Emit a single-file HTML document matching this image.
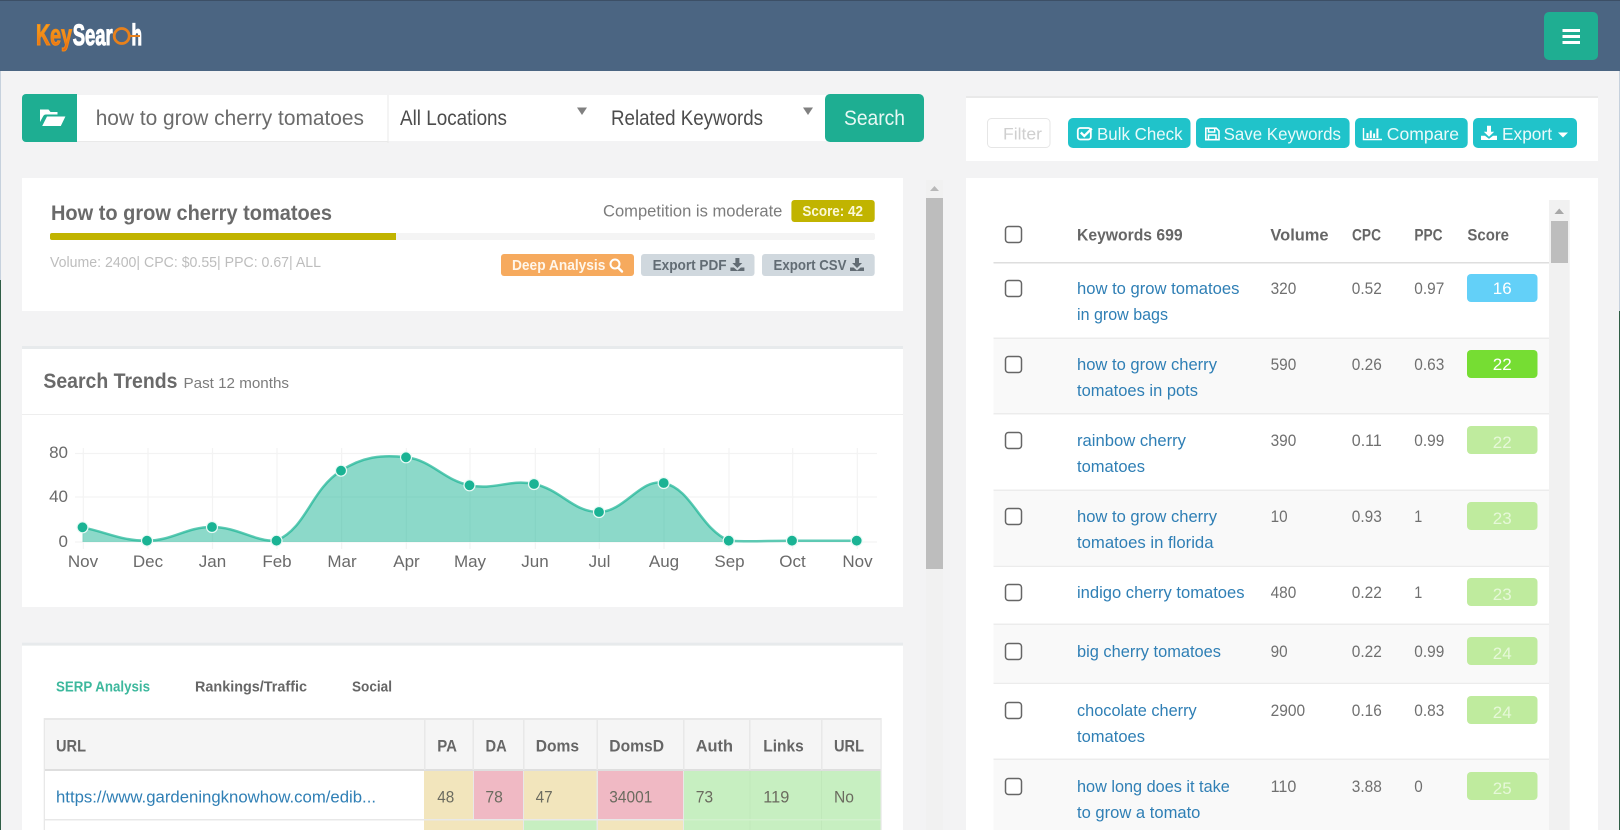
<!DOCTYPE html>
<html lang="en">
<head>
<meta charset="utf-8">
<title>KeySearch</title>
<style>
html,body{margin:0;padding:0;background:#f3f3f4;width:1620px;height:830px;overflow:hidden}
svg{display:block;position:absolute;left:0;top:0}
text{font-family:"Liberation Sans",Arial,sans-serif}
.b{font-weight:700}
.th{font-size:16.500px;font-weight:700;fill:#666}
.lk{font-size:17px;fill:#2f7fb5}
.n{font-size:17px;fill:#707070}
.sc{font-size:17px;fill:#fff;text-anchor:middle}
.fd{font-size:17px;fill:#e6f8d8;text-anchor:middle}
.bt{font-size:17.500px;fill:#eafafa}
.ax{font-size:17px;fill:#6a6a6a;text-anchor:middle}
.ay{font-size:17px;fill:#6a6a6a;text-anchor:end}
.cb{fill:#fff;stroke:#666;stroke-width:1.5}
.cell{font-size:17px;fill:#6b6b5f}
</style>
</head>
<body>
<svg xmlns="http://www.w3.org/2000/svg" width="1620" height="830" viewBox="0 0 1620 830">
<defs>
<linearGradient id="og" x1="0" y1="0" x2="0" y2="1"><stop offset="0" stop-color="#f9b020"/><stop offset="1" stop-color="#e9640f"/></linearGradient>
</defs>
<rect width="1620" height="830" fill="#f3f3f4"/>
<!-- edges -->
<rect x="0" y="71" width="1" height="209" fill="#c6d1dd"/>
<rect x="0" y="280" width="1" height="550" fill="#2f5d46"/>
<rect x="1619" y="71" width="1" height="240" fill="#c6d1dd"/>
<rect x="1619" y="311" width="1" height="519" fill="#2f5d46"/>
<!-- header -->
<rect width="1620" height="71" fill="#4b6582"/>
<rect width="1620" height="1" fill="#3c4f66"/>
<text x="36" y="45" font-size="30" class="b" fill="url(#og)" stroke="#f08a18" stroke-width="1.100" textLength="36" lengthAdjust="spacingAndGlyphs">Key</text>
<text x="72.700" y="45" font-size="30" class="b" fill="#fff" stroke="#fff" stroke-width="1.100" textLength="40" lengthAdjust="spacingAndGlyphs">Sear</text>
<circle cx="121.700" cy="36" r="7.500" fill="none" stroke="#e8811c" stroke-width="2.800"/>
<text x="131.500" y="45" font-size="30" class="b" fill="#fff" stroke="#fff" stroke-width="1.300" textLength="10.500" lengthAdjust="spacingAndGlyphs">h</text>
<rect x="129" y="35" width="11" height="2" fill="#e8811c"/>
<rect x="1544" y="12" width="54" height="48" rx="5" fill="#1fae92"/>
<rect x="1562.500" y="29" width="17.500" height="3" fill="#fff"/><rect x="1562.500" y="35" width="17.500" height="3" fill="#fff"/><rect x="1562.500" y="41" width="17.500" height="3" fill="#fff"/>

<!-- search row -->
<rect x="77" y="95" width="749" height="46" fill="#fff"/>
<rect x="387.500" y="95" width="1" height="48" fill="#e8e8e8"/>
<rect x="77" y="141" width="311" height="1" fill="#e9e9e9"/>
<path d="M26 94h51v48H26a4 4 0 0 1-4-4V98a4 4 0 0 1 4-4z" fill="#1eae92"/>
<path d="M40 109.500h8.500l2 2.500h7v2.500h-11.500c-1.500 0-2.300.7-3 2l-3 5.500z" fill="#fff"/>
<path d="M47 116.500h18.400l-4.600 9.500h-18.600z" fill="#fff"/>
<text x="95.700" y="125" font-size="21.500" fill="#6b6b6b" textLength="268.300" lengthAdjust="spacingAndGlyphs">how to grow cherry tomatoes</text>
<text x="400" y="125" font-size="21" fill="#4c4c4c" textLength="107" lengthAdjust="spacingAndGlyphs">All Locations</text>
<path d="M577 107.500h10l-5 7.500z" fill="#808080"/>
<text x="611" y="125" font-size="21" fill="#4c4c4c" textLength="152" lengthAdjust="spacingAndGlyphs">Related Keywords</text>
<path d="M803 107.500h10l-5 7.500z" fill="#808080"/>
<rect x="825" y="94" width="99" height="48" rx="5" fill="#1eae92"/>
<text x="844" y="125" font-size="21.500" fill="#e8f8f4" textLength="61" lengthAdjust="spacingAndGlyphs">Search</text>

<!-- summary card -->
<rect x="22" y="178" width="881" height="133" fill="#fff"/>
<text x="51" y="220" font-size="21" class="b" fill="#6a6a6a" textLength="281" lengthAdjust="spacingAndGlyphs">How to grow cherry tomatoes</text>
<rect x="50" y="233" width="825" height="7" rx="2" fill="#f4f4f4"/>
<path d="M52 233h344v7H52a2 2 0 0 1-2-2v-3a2 2 0 0 1 2-2z" fill="#c1b400"/>
<text x="50" y="267" font-size="15" fill="#bdbdbd" textLength="271" lengthAdjust="spacingAndGlyphs">Volume: 2400| CPC: $0.55| PPC: 0.67| ALL</text>
<text x="603" y="216.500" font-size="17" fill="#7c7c7c" textLength="179.400" lengthAdjust="spacingAndGlyphs">Competition is moderate</text>
<rect x="791.400" y="200" width="83.300" height="22" rx="3" fill="#c1b400"/>
<text x="802.400" y="216" font-size="15" class="b" fill="#fbf8d8" textLength="60.600" lengthAdjust="spacingAndGlyphs">Score: 42</text>
<rect x="501" y="254" width="133" height="22" rx="3" fill="#f6aa5e"/>
<text x="512" y="270" font-size="15" class="b" fill="#fff6ea" textLength="93.400" lengthAdjust="spacingAndGlyphs">Deep Analysis</text>
<circle cx="615" cy="264" r="4.500" fill="none" stroke="#fff" stroke-width="2"/>
<path d="M618 267.500l4 4" stroke="#fff" stroke-width="2.400" stroke-linecap="round"/>
<rect x="641" y="254" width="113.500" height="22" rx="3" fill="#d0d8de"/>
<text x="652.600" y="270" font-size="15" class="b" fill="#626c74" textLength="74" lengthAdjust="spacingAndGlyphs">Export PDF</text>
<path transform="translate(730.400 258)" d="M5 0h4v5h3l-5 5-5-5h3zM0 9.500h3.500L7 12.500l3.500-3H14V13H0z" fill="#626c74"/>
<rect x="762" y="254" width="112.700" height="22" rx="3" fill="#d0d8de"/>
<text x="773.500" y="270" font-size="15" class="b" fill="#626c74" textLength="73" lengthAdjust="spacingAndGlyphs">Export CSV</text>
<path transform="translate(850 258)" d="M5 0h4v5h3l-5 5-5-5h3zM0 9.500h3.500L7 12.500l3.500-3H14V13H0z" fill="#626c74"/>

<!-- left scrollbar -->
<rect x="926" y="180" width="17" height="650" fill="#f1f1f1"/>
<path d="M930 191h9l-4.500-5z" fill="#b8b8b8"/>
<rect x="926" y="198" width="17" height="371" fill="#bdbdbd"/>

<!-- trends card -->
<rect x="22" y="346" width="881" height="3" fill="#e7eaec"/>
<rect x="22" y="349" width="881" height="258" fill="#fff"/>
<text x="43.400" y="388" font-size="21" class="b" fill="#6a6a6a" textLength="134" lengthAdjust="spacingAndGlyphs">Search Trends</text>
<text x="183.500" y="388" font-size="15" fill="#7c7c7c" textLength="105.500" lengthAdjust="spacingAndGlyphs">Past 12 months</text>
<rect x="22" y="414" width="881" height="1" fill="#eeeeee"/>
<g stroke="#f3f3f3" stroke-width="1.200">
<path d="M75 453.500H877M75 497H877M75 542H877"/>
<path d="M83.300 448V549M148 448V549M212.500 448V549M277 448V549M341.600 448V549M406.300 448V549M470 448V549M535.300 448V549M599.300 448V549M664 448V549M729 448V549M792.700 448V549M857.300 448V549"/>
</g>
<path d="M82.500 527.300C108.300 532.700 121.200 540.800 147 540.700C173 540.600 186.100 527 212 527C237.900 527 255.300 542 276.500 540.700C306.900 527.400 310.400 490.400 341 470.700C362.200 457 380.800 454.400 406 457.300C432.200 460.300 443 479.800 469.500 485.300C494.200 490.500 509.300 478.900 534 484C561.100 489.600 573 512.200 599 512C624.900 511.800 640.400 477.800 663.700 483C692.200 489.300 699.100 527.400 728.700 540.700V542H82.500Z" fill="#1ab394" fill-opacity=".5"/>
<path d="M82.500 527.300C108.300 532.700 121.200 540.800 147 540.700C173 540.600 186.100 527 212 527C237.900 527 255.300 542 276.500 540.700C306.900 527.400 310.400 490.400 341 470.700C362.200 457 380.800 454.400 406 457.300C432.200 460.300 443 479.800 469.500 485.300C494.200 490.500 509.300 478.900 534 484C561.100 489.600 573 512.200 599 512C624.900 511.800 640.400 477.800 663.700 483C692.200 489.300 699.100 527.400 728.700 540.700C750.400 542 766.700 540.700 792 540.700C817.900 540.700 830.800 540.700 856.700 540.700" fill="none" stroke="#1ab394" stroke-opacity=".7" stroke-width="2.500"/>
<g fill="#1ab394" stroke="#eafaf6" stroke-width="1.200">
<circle cx="82.500" cy="527.300" r="5.500"/><circle cx="147" cy="540.700" r="5.500"/><circle cx="212" cy="527" r="5.500"/><circle cx="276.500" cy="540.700" r="5.500"/><circle cx="341" cy="470.700" r="5.500"/><circle cx="406" cy="457.300" r="5.500"/><circle cx="469.500" cy="485.300" r="5.500"/><circle cx="534" cy="484" r="5.500"/><circle cx="599" cy="512" r="5.500"/><circle cx="663.700" cy="483" r="5.500"/><circle cx="728.700" cy="540.700" r="5.500"/><circle cx="792" cy="540.700" r="5.500"/><circle cx="856.700" cy="540.700" r="5.500"/>
</g>
<text class="ay" x="68" y="458">80</text><text class="ay" x="68" y="502">40</text><text class="ay" x="68" y="547">0</text>
<text class="ax" x="83" y="567">Nov</text><text class="ax" x="148" y="567">Dec</text><text class="ax" x="212.500" y="567">Jan</text><text class="ax" x="277" y="567">Feb</text><text class="ax" x="342" y="567">Mar</text><text class="ax" x="406.500" y="567">Apr</text><text class="ax" x="470" y="567">May</text><text class="ax" x="535" y="567">Jun</text><text class="ax" x="599.500" y="567">Jul</text><text class="ax" x="664" y="567">Aug</text><text class="ax" x="729.500" y="567">Sep</text><text class="ax" x="792.500" y="567">Oct</text><text class="ax" x="857.500" y="567">Nov</text>

<!-- SERP card -->
<rect x="22" y="642.700" width="881" height="3" fill="#e7eaec"/>
<rect x="22" y="645.700" width="881" height="185" fill="#fff"/>
<text x="56" y="691.700" font-size="15" class="b" fill="#3db89d" textLength="94" lengthAdjust="spacingAndGlyphs">SERP Analysis</text>
<text x="195" y="691.700" font-size="15" class="b" fill="#666" textLength="112" lengthAdjust="spacingAndGlyphs">Rankings/Traffic</text>
<text x="352" y="691.700" font-size="15" class="b" fill="#666" textLength="40" lengthAdjust="spacingAndGlyphs">Social</text>
<rect x="43.700" y="718" width="838" height="112" fill="#e8e8e8"/>
<rect x="45" y="720" width="835.500" height="49" fill="#f5f5f5"/>
<rect x="45" y="769" width="835.500" height="2" fill="#dedede"/>
<rect x="424" y="720" width="1.500" height="50" fill="#e8e8e8"/><rect x="472.500" y="720" width="1.500" height="50" fill="#e8e8e8"/><rect x="523" y="720" width="1.500" height="50" fill="#e8e8e8"/><rect x="596.500" y="720" width="1.500" height="50" fill="#e8e8e8"/><rect x="683" y="720" width="1.500" height="50" fill="#e8e8e8"/><rect x="749" y="720" width="1.500" height="50" fill="#e8e8e8"/><rect x="821" y="720" width="1.500" height="50" fill="#e8e8e8"/>
<rect x="45" y="771" width="379" height="48" fill="#fff"/>
<rect x="45" y="820.500" width="379" height="10" fill="#fff"/>
<rect x="424" y="771" width="49" height="48" fill="#f2e5bc"/>
<rect x="474" y="771" width="49" height="48" fill="#f0b9c4"/>
<rect x="524" y="771" width="72.500" height="48" fill="#f2e5bc"/>
<rect x="598" y="771" width="85" height="48" fill="#f0b9c4"/>
<rect x="684" y="771" width="196.500" height="48" fill="#c7efc1"/>
<rect x="424" y="820.500" width="99" height="10" fill="#f2e5bc"/>
<rect x="524" y="820.500" width="72.500" height="10" fill="#c7efc1"/>
<rect x="598" y="820.500" width="85" height="10" fill="#f2e5bc"/>
<rect x="684" y="820.500" width="196.500" height="10" fill="#c7efc1"/>
<rect x="749.500" y="771" width="1" height="60" fill="#c0e8ba"/><rect x="821" y="771" width="1" height="60" fill="#c0e8ba"/><rect x="684" y="819" width="196.500" height="1.500" fill="#d2f0cd"/>
<text class="th" x="56" y="751.700" textLength="30" lengthAdjust="spacingAndGlyphs">URL</text>
<text class="th" x="437.300" y="751.700" textLength="19.700" lengthAdjust="spacingAndGlyphs">PA</text>
<text class="th" x="485.500" y="751.700" textLength="21.200" lengthAdjust="spacingAndGlyphs">DA</text>
<text class="th" x="535.700" y="751.700" textLength="43.300" lengthAdjust="spacingAndGlyphs">Doms</text>
<text class="th" x="609.300" y="751.700" textLength="54.700" lengthAdjust="spacingAndGlyphs">DomsD</text>
<text class="th" x="695.700" y="751.700" textLength="37.300" lengthAdjust="spacingAndGlyphs">Auth</text>
<text class="th" x="763.300" y="751.700" textLength="40.400" lengthAdjust="spacingAndGlyphs">Links</text>
<text class="th" x="834" y="751.700" textLength="30" lengthAdjust="spacingAndGlyphs">URL</text>
<text class="lk" x="56" y="802.700" textLength="320" lengthAdjust="spacingAndGlyphs">https://www.gardeningknowhow.com/edib...</text>
<text class="cell" x="437.300" y="802.700" textLength="17" lengthAdjust="spacingAndGlyphs">48</text>
<text class="cell" x="485.400" y="802.700" textLength="17.500" lengthAdjust="spacingAndGlyphs">78</text>
<text class="cell" x="535.600" y="802.700" textLength="17" lengthAdjust="spacingAndGlyphs">47</text>
<text class="cell" x="609.300" y="802.700" textLength="43" lengthAdjust="spacingAndGlyphs">34001</text>
<text class="cell" x="695.700" y="802.700" textLength="17.500" lengthAdjust="spacingAndGlyphs">73</text>
<text class="cell" x="763.300" y="802.700" textLength="26" lengthAdjust="spacingAndGlyphs">119</text>
<text class="cell" x="834" y="802.700" textLength="20" lengthAdjust="spacingAndGlyphs">No</text>

<!-- toolbar card -->
<rect x="966" y="96" width="632" height="2" fill="#e9e9e9"/>
<rect x="966" y="98" width="632" height="63" fill="#fff"/>
<rect x="987.500" y="118.500" width="62.500" height="29" rx="4" fill="#fff" stroke="#e6e6e6"/>
<text x="1003" y="139.500" font-size="17" fill="#cfcfcf" textLength="39" lengthAdjust="spacingAndGlyphs">Filter</text>
<g fill="#20c3ca">
<rect x="1068" y="118" width="122.500" height="30" rx="5"/>
<rect x="1196" y="118" width="153.600" height="30" rx="5"/>
<rect x="1355" y="118" width="112.700" height="30" rx="5"/>
<rect x="1473" y="118" width="104" height="30" rx="5"/>
</g>
<!-- check-square -->
<rect x="1077.800" y="128" width="13" height="11.500" rx="2.500" fill="none" stroke="#fff" stroke-width="1.800"/>
<path d="M1080.800 132.500l3.500 3.500 7.500-7.500" fill="none" stroke="#fff" stroke-width="2.300"/>
<text class="bt" x="1097" y="140" textLength="85.600" lengthAdjust="spacingAndGlyphs">Bulk Check</text>
<!-- save -->
<path d="M1205.800 128.200h10.500l2.700 2.800v8.700h-13.200z" fill="none" stroke="#fff" stroke-width="1.600"/>
<path d="M1208.500 128.500v3.500h6.200v-3.500M1208.500 139.500v-4.500h7.500v4.500" fill="none" stroke="#fff" stroke-width="1.500"/>
<text class="bt" x="1223.600" y="140" textLength="117.400" lengthAdjust="spacingAndGlyphs">Save Keywords</text>
<!-- chart -->
<path d="M1363.500 128v11.500h18.500" fill="none" stroke="#fff" stroke-width="1.400"/>
<path d="M1366.500 133h2v5h-2zM1369.800 130.500h2v7.500h-2zM1373.100 133.500h2v4.500h-2zM1376.400 128.500h2v9.500h-2z" fill="#fff"/>
<text class="bt" x="1386.800" y="140" textLength="72.200" lengthAdjust="spacingAndGlyphs">Compare</text>
<!-- export -->
<path transform="translate(1481 125.700)" d="M6 0h4v6h3.200L8 11 2.800 6H6zM0 10h4l4 3.200 4-3.200h4v4.300H0z" fill="#fff"/>
<text class="bt" x="1502" y="140" textLength="50" lengthAdjust="spacingAndGlyphs">Export</text>
<path d="M1558 132.500h10l-5 5z" fill="#fff"/>

<!-- keyword card -->
<rect x="966" y="178" width="632" height="652" fill="#fff"/>
<rect x="1549" y="200" width="20.700" height="630" fill="#f1f1f1"/>
<path d="M1554.500 214h9.500l-4.750-5.500z" fill="#a8a8a8"/>
<rect x="1551" y="221" width="17" height="42" fill="#bdbdbd"/>
<rect class="cb" x="1005.500" y="226.500" width="16" height="16" rx="3"/>
<text class="th" x="1077" y="240.700" textLength="105.600" lengthAdjust="spacingAndGlyphs">Keywords 699</text>
<text class="th" x="1270.400" y="240.700" textLength="58.200" lengthAdjust="spacingAndGlyphs">Volume</text>
<text class="th" x="1352" y="240.700" textLength="29" lengthAdjust="spacingAndGlyphs">CPC</text>
<text class="th" x="1414.400" y="240.700" textLength="28.200" lengthAdjust="spacingAndGlyphs">PPC</text>
<text class="th" x="1467.400" y="240.700" textLength="41.600" lengthAdjust="spacingAndGlyphs">Score</text>
<rect x="993.500" y="262" width="555.500" height="1.500" fill="#dedede"/>
<!-- row backgrounds -->
<rect x="993.500" y="339" width="555.500" height="74" fill="#f9f9f9"/>
<rect x="993.500" y="491" width="555.500" height="74" fill="#f9f9f9"/>
<rect x="993.500" y="625" width="555.500" height="57" fill="#f9f9f9"/>
<rect x="993.500" y="760" width="555.500" height="70" fill="#f9f9f9"/>
<g fill="#ececec">
<rect x="993.500" y="337.500" width="555.500" height="1.500"/><rect x="993.500" y="413" width="555.500" height="1.500"/><rect x="993.500" y="489.500" width="555.500" height="1.500"/><rect x="993.500" y="565.500" width="555.500" height="1.500"/><rect x="993.500" y="623.500" width="555.500" height="1.500"/><rect x="993.500" y="682.500" width="555.500" height="1.500"/><rect x="993.500" y="758.500" width="555.500" height="1.500"/>
</g>
<!-- checkboxes -->
<rect class="cb" x="1005.500" y="280.500" width="16" height="16" rx="3"/>
<rect class="cb" x="1005.500" y="356.500" width="16" height="16" rx="3"/>
<rect class="cb" x="1005.500" y="432.500" width="16" height="16" rx="3"/>
<rect class="cb" x="1005.500" y="508.500" width="16" height="16" rx="3"/>
<rect class="cb" x="1005.500" y="584.500" width="16" height="16" rx="3"/>
<rect class="cb" x="1005.500" y="643.500" width="16" height="16" rx="3"/>
<rect class="cb" x="1005.500" y="702.500" width="16" height="16" rx="3"/>
<rect class="cb" x="1005.500" y="778.500" width="16" height="16" rx="3"/>
<!-- row 1 -->
<text class="lk" x="1077" y="294" textLength="162.400" lengthAdjust="spacingAndGlyphs">how to grow tomatoes</text>
<text class="lk" x="1077" y="320" textLength="91" lengthAdjust="spacingAndGlyphs">in grow bags</text>
<text class="n" x="1270.600" y="294" textLength="25.700" lengthAdjust="spacingAndGlyphs">320</text>
<text class="n" x="1351.800" y="294" textLength="30" lengthAdjust="spacingAndGlyphs">0.52</text>
<text class="n" x="1414.300" y="294" textLength="30" lengthAdjust="spacingAndGlyphs">0.97</text>
<rect x="1467" y="274" width="70.500" height="28" rx="4" fill="#63d0f8"/>
<text class="sc" x="1502.200" y="294">16</text>
<!-- row 2 -->
<text class="lk" x="1077" y="370" textLength="140" lengthAdjust="spacingAndGlyphs">how to grow cherry</text>
<text class="lk" x="1077" y="396" textLength="121" lengthAdjust="spacingAndGlyphs">tomatoes in pots</text>
<text class="n" x="1270.600" y="370" textLength="25.700" lengthAdjust="spacingAndGlyphs">590</text>
<text class="n" x="1351.800" y="370" textLength="30" lengthAdjust="spacingAndGlyphs">0.26</text>
<text class="n" x="1414.300" y="370" textLength="30" lengthAdjust="spacingAndGlyphs">0.63</text>
<rect x="1467" y="350" width="70.500" height="28" rx="4" fill="#76dd33"/>
<text class="sc" x="1502.200" y="370">22</text>
<!-- row 3 -->
<text class="lk" x="1077" y="446" textLength="109" lengthAdjust="spacingAndGlyphs">rainbow cherry</text>
<text class="lk" x="1077" y="472" textLength="68" lengthAdjust="spacingAndGlyphs">tomatoes</text>
<text class="n" x="1270.600" y="446" textLength="25.700" lengthAdjust="spacingAndGlyphs">390</text>
<text class="n" x="1351.800" y="446" textLength="30" lengthAdjust="spacingAndGlyphs">0.11</text>
<text class="n" x="1414.300" y="446" textLength="30" lengthAdjust="spacingAndGlyphs">0.99</text>
<rect x="1467" y="426" width="70.500" height="28" rx="4" fill="#bfeb9e"/>
<text class="fd" x="1502.200" y="448">22</text>
<!-- row 4 -->
<text class="lk" x="1077" y="522" textLength="140" lengthAdjust="spacingAndGlyphs">how to grow cherry</text>
<text class="lk" x="1077" y="548" textLength="136.500" lengthAdjust="spacingAndGlyphs">tomatoes in florida</text>
<text class="n" x="1270.600" y="522" textLength="17" lengthAdjust="spacingAndGlyphs">10</text>
<text class="n" x="1351.800" y="522" textLength="30" lengthAdjust="spacingAndGlyphs">0.93</text>
<text class="n" x="1414.300" y="522" textLength="8" lengthAdjust="spacingAndGlyphs">1</text>
<rect x="1467" y="502" width="70.500" height="28" rx="4" fill="#bfeb9e"/>
<text class="fd" x="1502.200" y="524">23</text>
<!-- row 5 -->
<text class="lk" x="1077" y="598" textLength="167.500" lengthAdjust="spacingAndGlyphs">indigo cherry tomatoes</text>
<text class="n" x="1270.600" y="598" textLength="25.700" lengthAdjust="spacingAndGlyphs">480</text>
<text class="n" x="1351.800" y="598" textLength="30" lengthAdjust="spacingAndGlyphs">0.22</text>
<text class="n" x="1414.300" y="598" textLength="8" lengthAdjust="spacingAndGlyphs">1</text>
<rect x="1467" y="578" width="70.500" height="28" rx="4" fill="#bfeb9e"/>
<text class="fd" x="1502.200" y="600">23</text>
<!-- row 6 -->
<text class="lk" x="1077" y="657" textLength="144" lengthAdjust="spacingAndGlyphs">big cherry tomatoes</text>
<text class="n" x="1270.600" y="657" textLength="17" lengthAdjust="spacingAndGlyphs">90</text>
<text class="n" x="1351.800" y="657" textLength="30" lengthAdjust="spacingAndGlyphs">0.22</text>
<text class="n" x="1414.300" y="657" textLength="30" lengthAdjust="spacingAndGlyphs">0.99</text>
<rect x="1467" y="637" width="70.500" height="28" rx="4" fill="#bfeb9e"/>
<text class="fd" x="1502.200" y="659">24</text>
<!-- row 7 -->
<text class="lk" x="1077" y="716" textLength="119.700" lengthAdjust="spacingAndGlyphs">chocolate cherry</text>
<text class="lk" x="1077" y="742" textLength="68" lengthAdjust="spacingAndGlyphs">tomatoes</text>
<text class="n" x="1270.600" y="716" textLength="34.500" lengthAdjust="spacingAndGlyphs">2900</text>
<text class="n" x="1351.800" y="716" textLength="30" lengthAdjust="spacingAndGlyphs">0.16</text>
<text class="n" x="1414.300" y="716" textLength="30" lengthAdjust="spacingAndGlyphs">0.83</text>
<rect x="1467" y="696" width="70.500" height="28" rx="4" fill="#bfeb9e"/>
<text class="fd" x="1502.200" y="718">24</text>
<!-- row 8 -->
<text class="lk" x="1077" y="792" textLength="152.800" lengthAdjust="spacingAndGlyphs">how long does it take</text>
<text class="lk" x="1077" y="818" textLength="123.400" lengthAdjust="spacingAndGlyphs">to grow a tomato</text>
<text class="n" x="1270.600" y="792" textLength="25.700" lengthAdjust="spacingAndGlyphs">110</text>
<text class="n" x="1351.800" y="792" textLength="30" lengthAdjust="spacingAndGlyphs">3.88</text>
<text class="n" x="1414.300" y="792" textLength="8.500" lengthAdjust="spacingAndGlyphs">0</text>
<rect x="1467" y="772" width="70.500" height="28" rx="4" fill="#bfeb9e"/>
<text class="fd" x="1502.200" y="794">25</text>
</svg>
</body>
</html>
